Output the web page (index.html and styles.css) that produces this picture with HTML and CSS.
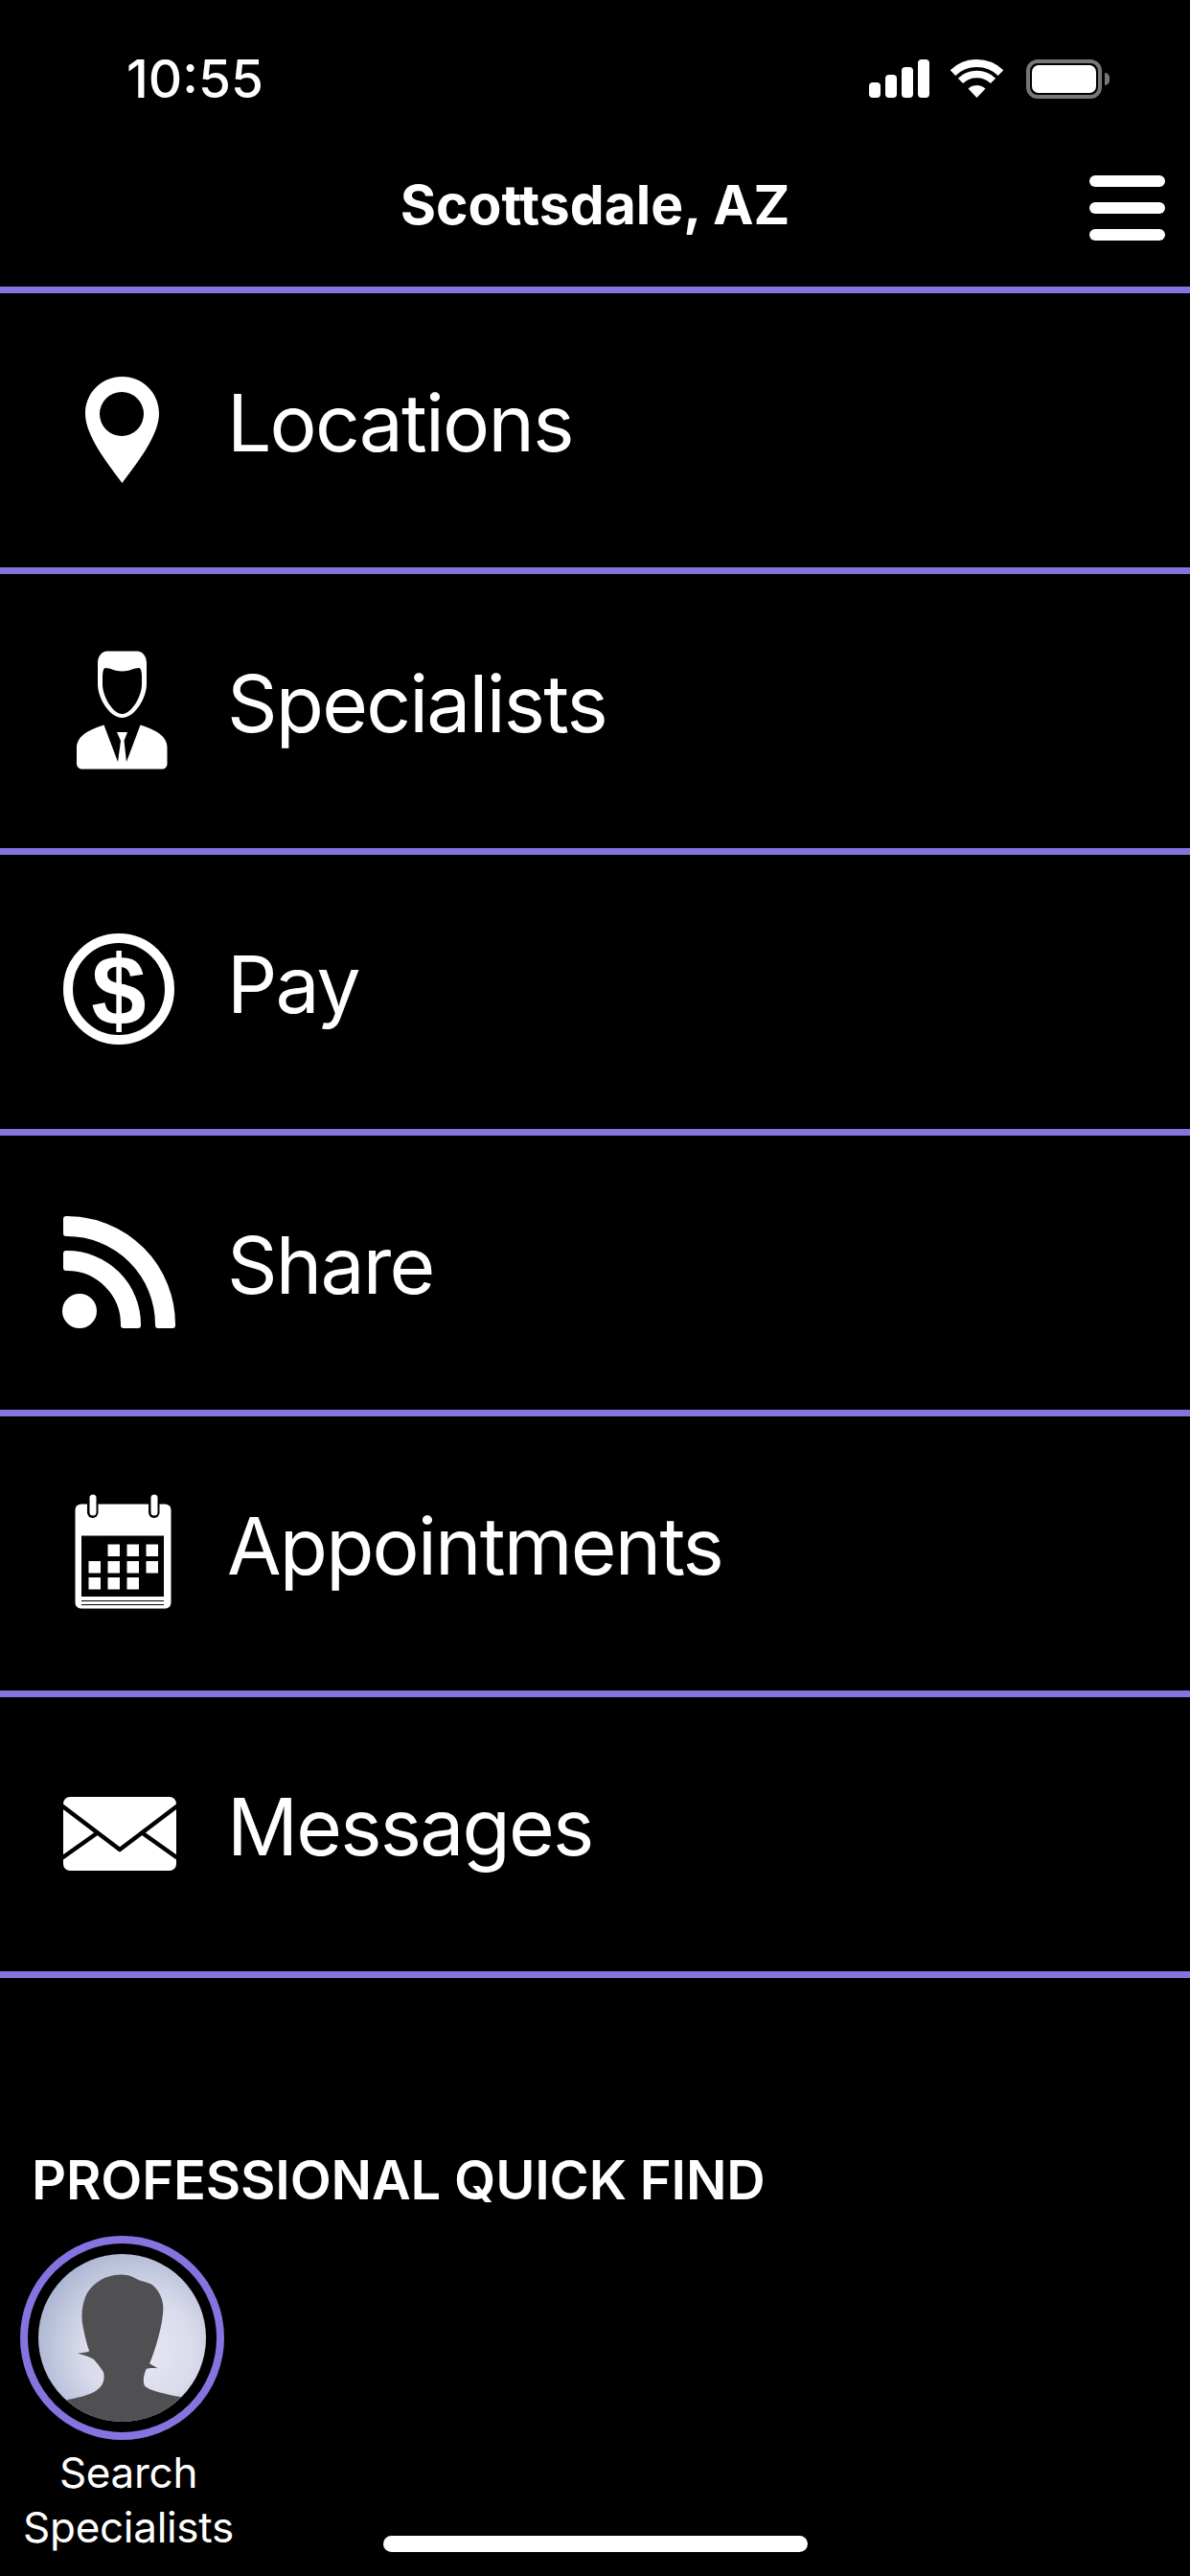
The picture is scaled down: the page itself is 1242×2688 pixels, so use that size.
FILE: index.html
```html
<!DOCTYPE html>
<html lang="en">
<head>
    <meta charset="UTF-8">
    <meta name="viewport" content="width=device-width, initial-scale=1.0">
    <title>Scottsdale, AZ</title>
    <link rel="stylesheet" href="styles.css">
</head>
<body>
    <header class="top">
        <div class="status">
            <span class="time">10:55</span>
            <div class="status-icons">
                <svg class="signal" width="63" height="40" viewBox="0 0 63 40">
                    <rect x="0" y="24" width="12" height="16" rx="4"/>
                    <rect x="17" y="16" width="12" height="24" rx="4"/>
                    <rect x="34" y="8" width="12" height="32" rx="4"/>
                    <rect x="51" y="0" width="12" height="40" rx="4"/>
                </svg>
                <svg class="wifi" width="55" height="40" viewBox="0 0 55 40">
                    <path class="wifi-arc" d="M2.5 14.1A36 36 0 0 1 52.5 14.1" stroke-width="8"/>
                    <path class="wifi-arc" d="M10.5 22.4A24.5 24.5 0 0 1 44.5 22.4" stroke-width="7.5"/>
                    <path d="M27.5 40L18.5 30.6A13 13 0 0 1 36.5 30.6Z"/>
                </svg>
                <div class="battery"><div class="battery-fill"></div></div>
                <div class="battery-nub"></div>
            </div>
        </div>
        <div class="nav">
            <span></span>
            <h1 class="nav-title">Scottsdale, AZ</h1>
            <div class="burger"><i></i><i></i><i></i></div>
        </div>
    </header>

    <ul class="menu">
        <li class="menu-item">
            <svg class="icon" viewBox="0 0 130 130">
                <path fill-rule="evenodd" d="M67.5 9C89 9 106 26 106 47.5C106 70 84 98 67.5 120C51 98 29 70 29 47.5C29 26 46 9 67.5 9ZM67 25A23 23 0 1 0 67 71A23 23 0 1 0 67 25Z"/>
            </svg>
            <span class="menu-label">Locations</span>
        </li>
        <li class="menu-item">
            <svg class="icon" viewBox="0 0 130 130">
                <path fill-rule="evenodd" d="M52 2.5H83C89 2.5 93 8 93 15V37C93 52 80 72 67.5 72C55 72 42 52 42 37V15C42 8 46 2.5 52 2.5ZM50 20C55 20 60 23.5 67.5 23.5C75 23.5 80 20 85 20C87 20 88 24 88 30V37C88 50 77 68 67.5 68C58 68 47 50 47 37V30C47 24 48 20 50 20Z"/>
                <path d="M48.5 79.5L63 118L66 96L62 87H73L69.5 96L72 118L86.5 79.5C100 84 114.5 90 114.5 103V120C114.5 123.5 112 125.5 109 125.5H26C23 125.5 20 123.5 20 120V103C20 90 35 84 48.5 79.5Z"/>
            </svg>
            <span class="menu-label">Specialists</span>
        </li>
        <li class="menu-item">
            <svg class="icon" viewBox="0 0 130 130">
                <circle class="ring" cx="64" cy="62" r="53"/>
                <text class="dollar" x="64" y="99" text-anchor="middle">$</text>
            </svg>
            <span class="menu-label">Pay</span>
        </li>
        <li class="menu-item">
            <svg class="icon rounded" viewBox="0 0 130 130">
                <circle cx="23" cy="105" r="15"/>
                <path d="M9 9H10A110 110 0 0 1 120 119V120H105V119A95 95 0 0 0 10 24H9Z"/>
                <path d="M9 45H10A74 74 0 0 1 84 119V120H69V119A59 59 0 0 0 10 60H9Z"/>
            </svg>
            <span class="menu-label">Share</span>
        </li>
        <li class="menu-item">
            <svg class="icon" viewBox="0 0 130 130">
                <rect x="18.5" y="13.5" width="100" height="109" rx="6"/>
                <rect class="cut" x="31" y="1" width="11.5" height="27" rx="5.7"/>
                <rect class="cut" x="95" y="1" width="11.5" height="27" rx="5.7"/>
                <rect x="33.5" y="3.5" width="7" height="22" rx="3.5"/>
                <rect x="97.5" y="3.5" width="7" height="22" rx="3.5"/>
                <rect class="cut" x="25" y="46.5" width="86" height="63.5"/>
                <rect x="52.5" y="55.5" width="12.5" height="12.5"/>
                <rect x="72.5" y="55.5" width="12.5" height="12.5"/>
                <rect x="92.5" y="55.5" width="12.5" height="12.5"/>
                <rect x="32.5" y="73" width="12.5" height="12.5"/>
                <rect x="52.5" y="73" width="12.5" height="12.5"/>
                <rect x="72.5" y="73" width="12.5" height="12.5"/>
                <rect x="92.5" y="73" width="12.5" height="12.5"/>
                <rect x="32.5" y="90" width="12.5" height="12.5"/>
                <rect x="52.5" y="90" width="12.5" height="12.5"/>
                <rect x="72.5" y="90" width="12.5" height="12.5"/>
                <rect class="cut" x="25" y="114" width="86" height="1"/>
                <rect class="cut" x="25" y="118" width="86" height="1"/>
            </svg>
            <span class="menu-label">Appointments</span>
        </li>
        <li class="menu-item">
            <svg class="icon" viewBox="0 0 130 130">
                <rect x="6" y="26" width="118" height="77" rx="7"/>
                <path class="mail-line" d="M3 34L65 81L127 34"/>
                <path class="mail-line" d="M3 91L41 64"/>
                <path class="mail-line" d="M127 91L89 64"/>
            </svg>
            <span class="menu-label">Messages</span>
        </li>
    </ul>

    <section class="quick">
        <h2 class="quick-title">PROFESSIONAL QUICK FIND</h2>
        <div class="finder">
            <div class="avatar-ring">
                <svg class="avatar" viewBox="92 92 525 525">
                    <path d="M150 565L185 548C225 540 265 532 285 510C298 495 300 480 296 462C285 445 270 425 262 420C250 412 235 408 215 403C230 402 245 400 252 396C245 380 238 350 232 320C225 290 228 255 240 225C255 190 290 165 330 158C350 155 375 155 395 168C410 178 430 178 448 188C470 205 484 235 483 265C482 300 470 350 455 395C450 410 445 425 440 435C448 440 458 445 466 450C455 448 440 448 430 452C422 470 418 490 425 505C440 520 490 530 540 540L600 560V640H150Z"/>
                </svg>
            </div>
            <div class="finder-label">Search<br>Specialists</div>
        </div>
    </section>

    <div class="home-bar"></div>
</body>
</html>
```

FILE: styles.css
```css
* {
    box-sizing: border-box;
}
html, body {
    margin: 0;
    padding: 0;
}
body {
    position: relative;
    width: 1242px;
    height: 2688px;
    overflow: hidden;
    background-color: #000;
    color: #fff;
    font-family: Inter, "Liberation Sans", sans-serif;
}
svg {
    display: block;
    fill: #fff;
}

/* status bar + title */
.top {
    height: 299px;
}
.status {
    display: flex;
    justify-content: space-between;
    align-items: flex-start;
    height: 172px;
    padding: 52px 84px 0 132px;
}
.time {
    font-size: 55px;
    font-weight: 500;
    line-height: 60px;
}
.status-icons {
    display: flex;
    align-items: flex-start;
    padding-top: 10px;
}
.signal {
    margin-right: 22px;
}
.wifi {
    margin-right: 24px;
}
.wifi-arc {
    fill: none;
    stroke: #fff;
}
.battery {
    width: 79px;
    height: 41px;
    padding: 2px;
    border: 4px solid #777;
    border-radius: 12px;
}
.battery-fill {
    width: 100%;
    height: 100%;
    background-color: #fff;
    border-radius: 7px;
}
.battery-nub {
    width: 5px;
    height: 13px;
    margin: 14px 0 0 3px;
    background-color: #777;
    border-radius: 0 6px 6px 0;
}
.nav {
    display: grid;
    grid-template-columns: 1fr auto 1fr;
    align-items: center;
    padding: 0 26px;
}
.nav-title {
    margin: 0;
    font-size: 57px;
    font-weight: 700;
    line-height: 84px;
}
.burger {
    justify-self: end;
    display: flex;
    flex-direction: column;
    gap: 16px;
    width: 79px;
    margin-top: 6px;
}
.burger i {
    display: block;
    height: 12px;
    background-color: #fff;
    border-radius: 6px;
}

/* menu */
.menu {
    margin: 0;
    padding: 0;
    list-style: none;
    border-bottom: 7px solid #8574e0;
}
.menu-item {
    display: flex;
    align-items: center;
    gap: 47px;
    height: 293px;
    padding-left: 60px;
    border-top: 7px solid #8574e0;
    font-size: 82px;
    font-weight: 400;
    letter-spacing: -1.8px;
}
.menu-label {
    margin-bottom: 16px;
}
.icon {
    flex: none;
    width: 130px;
    height: 130px;
}
.icon.rounded {
    stroke: #fff;
    stroke-width: 6;
    stroke-linejoin: round;
}
.ring {
    fill: none;
    stroke: #fff;
    stroke-width: 10;
}
.dollar {
    font-family: "Liberation Sans", sans-serif;
    font-size: 103px;
    font-weight: 700;
    letter-spacing: 0;
}
.cut {
    fill: #000;
}
.mail-line {
    fill: none;
    stroke: #000;
    stroke-width: 4.5;
    stroke-linejoin: round;
}

/* quick find */
.quick {
    padding-top: 179px;
}
.quick-title {
    margin: 0 0 26px 33px;
    font-size: 56px;
    font-weight: 600;
    letter-spacing: -0.15px;
    line-height: 64px;
}
.finder {
    width: 268px;
}
.avatar-ring {
    width: 213px;
    height: 213px;
    margin-left: 21px;
    padding: 11px;
    border: 8px solid #8574e0;
    border-radius: 50%;
}
.avatar {
    width: 100%;
    height: 100%;
    border-radius: 50%;
    fill: #505053;
    background: radial-gradient(circle at 60% 58%, #e9e9f4 0%, #d9dbeb 40%, #a6b2d0 80%);
}
.finder-label {
    margin-top: 6px;
    font-size: 44px;
    letter-spacing: -0.3px;
    line-height: 57px;
    text-align: center;
}

.home-bar {
    position: absolute;
    left: 400px;
    top: 2646px;
    width: 443px;
    height: 17px;
    background-color: #fff;
    border-radius: 9px;
}
```
